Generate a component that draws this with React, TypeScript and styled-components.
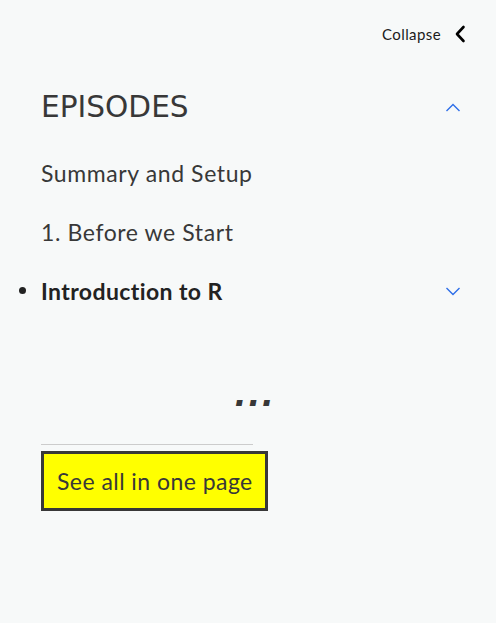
import React from "react";
import styled, { createGlobalStyle } from "styled-components";

const Global = createGlobalStyle`
  html, body { margin: 0; padding: 0; background: #ffffff; }
  body { font-family: Lato, "Noto Sans", sans-serif; color: #383838; }
`;

const Sidebar = styled.aside`
  width: 496px;
  min-height: 623px;
  background: #f7f9f9;
  box-sizing: border-box;
  display: flex;
  flex-direction: column;
`;

const TopBar = styled.div`
  display: flex;
  justify-content: flex-end;
  padding: 23px 30px 0 0;
  height: 22px;
`;

const CollapseButton = styled.button`
  display: flex;
  align-items: center;
  gap: 13px;
  background: none;
  border: none;
  padding: 0;
  font-family: Lato, "Noto Sans", sans-serif;
  font-size: 15px;
  letter-spacing: 0.4px;
  color: #1b1b1b;
  cursor: pointer;
`;

const Column = styled.nav`
  width: 425px;
  margin: 45px 0 0 41px;
  display: flex;
  flex-direction: column;
`;

const SectionHeader = styled.div`
  display: flex;
  align-items: center;
  justify-content: space-between;
  height: 35px;
  margin-bottom: 18px;
`;

const SectionTitle = styled.h2`
  margin: 0;
  font-family: "DejaVu Sans", sans-serif;
  font-weight: 400;
  font-size: 29.6px;
  line-height: 35px;
  color: #383838;
`;

const Chevron = styled.svg`
  width: 16px;
  height: 16px;
  margin-right: 5px;
  flex: none;
`;

const EpisodeRow = styled.div<{ $current?: boolean }>`
  display: flex;
  align-items: center;
  justify-content: space-between;
  height: 59px;
  font-size: 23px;
  letter-spacing: ${(p) => (p.$current ? "0.4px" : "0.6px")};
  font-weight: ${(p) => (p.$current ? 700 : 400)};
  color: ${(p) => (p.$current ? "#222222" : "#383838")};
`;

const EpisodeLabel = styled.span`
  display: flex;
  align-items: center;
`;

const Bullet = styled.span`
  width: 7px;
  height: 7px;
  border-radius: 50%;
  background: #222222;
  margin-left: -22px;
  margin-right: 15px;
  flex: none;
`;

const Ellipsis = styled.div`
  text-align: center;
  font-family: "Liberation Sans", sans-serif;
  font-style: italic;
  font-weight: 700;
  font-size: 40px;
  line-height: 40px;
  letter-spacing: 2.5px;
  padding-left: 4px;
  color: #383838;
  margin-top: 52px;
`;

const Rule = styled.hr`
  width: 212px;
  margin: 32px 0 6px 0;
  border: none;
  border-top: 1px solid #cccccc;
`;

const AllInOne = styled.a`
  align-self: flex-start;
  display: inline-flex;
  align-items: center;
  height: 54px;
  padding: 0 12px 0 13px;
  background: #ffff00;
  border: 3px solid #383838;
  font-size: 23px;
  letter-spacing: 0.45px;
  color: #383838;
  text-decoration: none;
`;

const ChevronUp = () => (
  <Chevron viewBox="0 0 16 16" fill="none">
    <polyline points="1.5,11 8,4.5 14.5,11" stroke="#2e6ee8" strokeWidth="1.4" />
  </Chevron>
);

const ChevronDown = () => (
  <Chevron viewBox="0 0 16 16" fill="none">
    <polyline points="1.5,5 8,11.5 14.5,5" stroke="#2e6ee8" strokeWidth="1.4" />
  </Chevron>
);

const CollapseIcon = styled.svg`
  width: 12px;
  height: 18px;
  flex: none;
`;

export default function App() {
  return (
    <>
      <Global />
      <Sidebar>
        <TopBar>
          <CollapseButton>
            Collapse
            <CollapseIcon viewBox="0 0 12 18" fill="none">
              <polyline points="9.5,2 3,9 9.5,16" stroke="#000" strokeWidth="2.6" strokeLinecap="round" strokeLinejoin="round" />
            </CollapseIcon>
          </CollapseButton>
        </TopBar>
        <Column>
          <SectionHeader>
            <SectionTitle>EPISODES</SectionTitle>
            <ChevronUp />
          </SectionHeader>
          <EpisodeRow>
            <EpisodeLabel>Summary and Setup</EpisodeLabel>
          </EpisodeRow>
          <EpisodeRow>
            <EpisodeLabel>1. Before we Start</EpisodeLabel>
          </EpisodeRow>
          <EpisodeRow $current>
            <EpisodeLabel>
              <Bullet />
              Introduction to R
            </EpisodeLabel>
            <ChevronDown />
          </EpisodeRow>
          <Ellipsis>...</Ellipsis>
          <Rule />
          <AllInOne href="#">See all in one page</AllInOne>
        </Column>
      </Sidebar>
    </>
  );
}
